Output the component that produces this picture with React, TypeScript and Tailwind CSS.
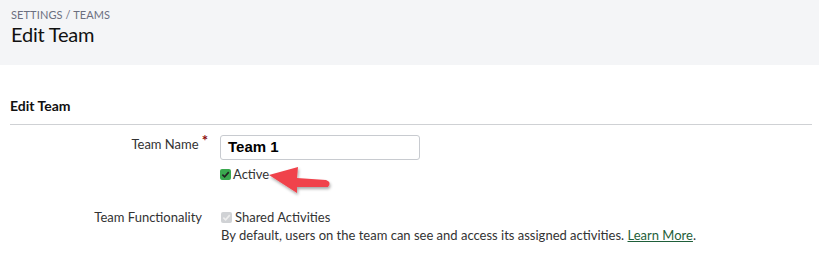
import React from "react";

export default function App() {
  return (
    <div className="w-[819px] h-[266px] bg-white overflow-hidden relative" style={{ fontFamily: "Lato, 'Open Sans', sans-serif" }}>
      <div className="bg-[#f4f5f7] h-[65px] px-[11px] pt-[7px]">
        <div className="text-[11px] leading-[15px] text-[#6b6f80] tracking-[0.1px]">SETTINGS / TEAMS</div>
        <div className="text-[20px] leading-[24px] text-[#111] tracking-[-0.2px]">Edit Team</div>
      </div>
      <div className="pl-[10px] pr-[7px] pt-[32px]">
        <div className="text-[14px] leading-[18px] font-bold text-[#111] pb-[9px] border-b border-[#cfd1d4]">Edit Team</div>
        <div className="flex mt-[10px]">
          <div className="w-[198px] text-right text-[13px] leading-[16px] text-[#333]">
            Team Name<span className="text-[#8b0a0a] text-[15px] font-bold ml-[3px] relative top-[-3px]">*</span>
          </div>
          <div className="ml-[12px]">
            <div className="w-[200px] h-[25px] border border-[#c8cbd0] rounded-[3px] flex items-center px-[7px] text-[15px] font-bold text-black" style={{ fontFamily: "'Liberation Sans', Arial, sans-serif" }}>Team 1</div>
            <div className="flex items-center mt-[7px] h-[14px]">
              <span className="w-[11px] h-[11px] bg-[#3aa84f] rounded-[2px] flex items-center justify-center">
                <svg width="9" height="9" viewBox="0 0 10 10"><path d="M1.5 5.2 L4 7.6 L8.6 2.4" stroke="#222" strokeWidth="1.8" fill="none" /></svg>
              </span>
              <span className="text-[13px] leading-[14px] text-[#333] ml-[2px]">Active</span>
            </div>
          </div>
        </div>
        <div className="flex mt-[27px]">
          <div className="w-[192px] text-right text-[13px] leading-[18px] text-[#333]">Team Functionality</div>
          <div className="ml-[19px] text-[13px] leading-[18px] text-[#333]">
            <div className="flex items-center">
              <span className="w-[11px] h-[11px] bg-[#d0d2d5] rounded-[2px] flex items-center justify-center">
                <svg width="9" height="9" viewBox="0 0 10 10"><path d="M1.5 5.2 L4 7.6 L8.6 2.4" stroke="#eee" strokeWidth="1.8" fill="none" /></svg>
              </span>
              <span className="ml-[3px]">Shared Activities</span>
            </div>
            <div>By default, users on the team can see and access its assigned activities. <span className="text-[#1f5f3a] underline">Learn More</span>.</div>
          </div>
        </div>
      </div>
      <svg className="absolute left-[262px] top-[160px]" width="80" height="40" viewBox="0 0 80 40">
        <defs>
          <filter id="sh" x="-20%" y="-40%" width="140%" height="180%">
            <feDropShadow dx="1" dy="2" stdDeviation="1.5" floodColor="#000" floodOpacity="0.35" />
          </filter>
        </defs>
        <path d="M7 15 L36 7 L35 18 L64 20 Q70 22 66 27 L35 27 L35 33 Z" fill="#f0434b" filter="url(#sh)" />
      </svg>
    </div>
  );
}
